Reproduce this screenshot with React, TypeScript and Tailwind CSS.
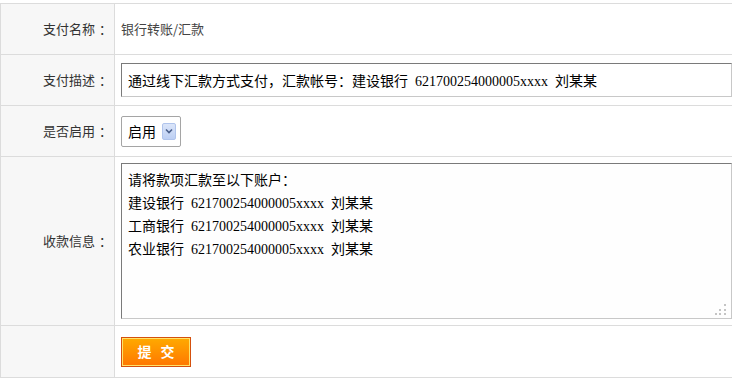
import { useState } from "react";

const cjk = "font-['Noto_Sans_CJK_SC','Noto_Sans',sans-serif]";
const field = "font-['Liberation_Serif','Noto_Sans_CJK_SC',serif] [word-spacing:3.5px]";

const bankLines = [
  "请将款项汇款至以下账户：",
  "建设银行 621700254000005xxxx 刘某某",
  "工商银行 621700254000005xxxx 刘某某",
  "农业银行 621700254000005xxxx 刘某某",
].join("\n");

function Row({
  label,
  height,
  children,
}: {
  label?: string;
  height: string;
  children: React.ReactNode;
}) {
  return (
    <div className={`flex border-b border-[#dcdcdc] ${height}`}>
      <div className="w-[114px] shrink-0 flex items-center justify-end pr-[2px] bg-[#f7f7f7] border-r border-[#dcdcdc] text-[13px] text-[#333]">
        {label && (
          <>
            <span>{label}</span>
            <span className="pl-[4px]">：</span>
          </>
        )}
      </div>
      <div className="flex-1 flex items-center pl-[6px]">{children}</div>
    </div>
  );
}

// little dotted grip like the old browser resize handle
function Grip() {
  return (
    <svg className="absolute right-[6px] bottom-[4px]" width="11" height="11" viewBox="0 0 11 11">
      <rect x="9" y="0" width="2" height="2" fill="#c4c4c4" />
      <rect x="4" y="5" width="2" height="2" fill="#c4c4c4" />
      <rect x="9" y="5" width="2" height="2" fill="#c4c4c4" />
      <rect x="0" y="9" width="2" height="2" fill="#c4c4c4" />
      <rect x="4" y="9" width="2" height="2" fill="#c4c4c4" />
      <rect x="9" y="9" width="2" height="2" fill="#c4c4c4" />
    </svg>
  );
}

export default function App() {
  const [enabled, setEnabled] = useState("启用");
  const [desc, setDesc] = useState(
    "通过线下汇款方式支付，汇款帐号：建设银行 621700254000005xxxx 刘某某"
  );

  return (
    <div className={`w-full min-h-screen bg-white overflow-hidden ${cjk}`}>
      <div className="mt-[3px] w-[760px] border-t border-l border-[#dcdcdc]">
        <Row label="支付名称" height="h-[51px]">
          <span className="text-[13px] text-[#444]">银行转账/汇款</span>
        </Row>

        <Row label="支付描述" height="h-[51px]">
          <input
            value={desc}
            onChange={(e) => setDesc(e.target.value)}
            className={`w-[611px] h-[34px] px-[6px] text-[14px] text-black bg-white outline-none border border-t-[#7a7a7a] border-l-[#7a7a7a] border-r-[#c8c8c8] border-b-[#c8c8c8] ${field}`}
          />
        </Row>

        <Row label="是否启用" height="h-[51px]">
          <div
            className="w-[60px] h-[31px] flex items-center justify-between pl-[6px] pr-[4px] border border-[#a5a5a5] rounded-[2px] bg-white cursor-pointer"
            onClick={() => setEnabled(enabled)}
          >
            <span className="text-[14px] text-black">{enabled}</span>
            <span className="w-[14px] h-[17px] flex items-center justify-center rounded-[2px] bg-gradient-to-b from-[#dbe5f9] to-[#bccff3] border border-[#b0c4ec]">
              <svg width="8" height="6" viewBox="0 0 8 6">
                <path d="M1 1.5 L4 4.5 L7 1.5" fill="none" stroke="#4a5f8a" strokeWidth="1.6" />
              </svg>
            </span>
          </div>
        </Row>

        <Row label="收款信息" height="h-[169px]">
          <div className="relative">
            <textarea
              defaultValue={bankLines}
              className={`block resize-none w-[611px] h-[156px] pt-[5px] px-[6px] text-[14px] leading-[23px] text-black bg-[#fefefe] outline-none border border-t-[#7a7a7a] border-l-[#7a7a7a] border-r-[#c8c8c8] border-b-[#c8c8c8] ${field}`}
            />
            <Grip />
          </div>
        </Row>

        <Row height="h-[52px]">
          <button className="w-[70px] h-[30px] border border-[#d4500e] bg-[#d4500e] p-0 cursor-pointer">
            <span className="w-full h-full flex items-center justify-center border border-[#ffe36a] bg-gradient-to-b from-[#ffa800] to-[#ff7800] text-white text-[14px] font-bold tracking-[3px] pl-[3px]">
              提 交
            </span>
          </button>
        </Row>
      </div>
    </div>
  );
}
